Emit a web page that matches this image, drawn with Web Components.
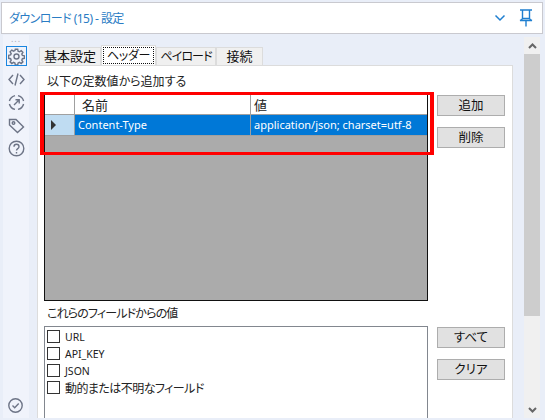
<!DOCTYPE html>
<html lang="ja">
<head>
<meta charset="utf-8">
<title>設定</title>
<style>
html, body { margin: 0; height: 420px; overflow: hidden; background: #e9eef8; }
body { font: 12px "Noto Sans", "Noto Sans CJK JP", sans-serif; color: #222; font-feature-settings: "palt"; }
</style>
</head>
<body>
<settings-window>
  <title-bar>ダウンロード (15) - 設定</title-bar>
  <side-rail></side-rail>
  <tab-strip>
    <tab-item style="width:62px">基本設定</tab-item>
    <tab-item style="width:55px" active kana>ヘッダー</tab-item>
    <tab-item style="width:60px" kana>ペイロード</tab-item>
    <tab-item style="width:47px">接続</tab-item>
  </tab-strip>
  <header-panel></header-panel>
  <scroll-rail></scroll-rail>
</settings-window>
<script>
class SettingsWindow extends HTMLElement {
  constructor() {
    super()
    const shadow = this.attachShadow({ mode: 'open' })
    shadow.innerHTML = `
    <style>
    :host { display: grid; width: 545px; height: 420px; overflow: hidden;
      grid-template-columns: 37px 487px 21px; grid-template-rows: 35px 30px 353px; }
    ::slotted(title-bar) { grid-column: 1 / 4; grid-row: 1; }
    ::slotted(side-rail) { grid-column: 1; grid-row: 2 / 4; }
    ::slotted(tab-strip) { grid-column: 2; grid-row: 2; }
    ::slotted(header-panel) { grid-column: 2; grid-row: 3; }
    ::slotted(scroll-rail) { grid-column: 3; grid-row: 2 / 4; }
    </style>
    <slot></slot>`
  }
}

class TitleBar extends HTMLElement {
  constructor() {
    super()
    const shadow = this.attachShadow({ mode: 'open' })
    shadow.innerHTML = `
    <style>
    :host { display: flex; align-items: center; box-sizing: border-box; height: 32px; margin: 2px 2px 1px 1px;
      padding: 0 9px 0 7px; background: #fff; border: 1px solid #c9c9cf; color: #2a7cc4; font-size: 12px; }
    span { flex: 1; letter-spacing: -.55px; }
    svg { display: block; }
    .down { margin-right: 13px; }
    </style>
    <span><slot></slot></span>
    <svg class="down" width="12" height="8" viewBox="0 0 12 8" fill="none" stroke="#1f7fd0" stroke-width="1.5"><path d="M1.500 1.500 6 6l4.500-4.500"/></svg>
    <svg width="14" height="18" viewBox="0 0 14 18" fill="none" stroke="#1f7fd0" stroke-width="1.4"><path d="M1 1h12M3.500 1v8.500M10.500 1v8.500M1 11.500c1-.3 2-1 2.500-2h7c.5 1 1.500 1.700 2.500 2zM7 11.500V17.500"/></svg>`
  }
}

class SideRail extends HTMLElement {
  constructor() {
    super()
    const shadow = this.attachShadow({ mode: 'open' })
    shadow.innerHTML = `
    <style>
    :host { display: flex; flex-direction: column; align-items: center; box-sizing: border-box; height: 383px;
      padding-top: 2px; background: #f0f3fb; width: 26px; margin-left: 3px; position: relative; }
    .dots { height: 9px; color: #a9adb8; font-size: 9px; line-height: 4px; letter-spacing: 1px; }
    .btn { width: 21px; height: 20px; box-sizing: border-box; display: flex; align-items: center; justify-content: center; margin-bottom: 3px; }
    .btn.on { border: 1px solid #1a86e0; }
    svg { display: block; fill: none; stroke: #6d7486; stroke-width: 1.4; }
    .check { position: absolute; left: 5px; top: 363px; }
    </style>
    <div class="dots">...</div>
    <div class="btn on"><svg width="17" height="17" viewBox="0 0 17 17"><circle cx="8.500" cy="8.500" r="2.500"/><path d="M7.300 1.200h2.400l.4 2 1.400.6 1.700-1.100 1.700 1.700-1.100 1.700.6 1.400 2 .4v2.400l-2 .4-.6 1.400 1.100 1.700-1.700 1.700-1.700-1.100-1.400.6-.4 2H7.300l-.4-2-1.400-.6-1.700 1.100-1.700-1.700 1.100-1.700-.6-1.400-2-.4V7.300l2-.4.6-1.400-1.100-1.700 1.700-1.700 1.700 1.100 1.400-.6z"/></svg></div>
    <div class="btn"><svg width="17" height="15" viewBox="0 0 17 15"><path d="M5 3 1 7.500 5 12M12 3l4 4.500-4 4.500M10 1.500l-3 12"/></svg></div>
    <div class="btn"><svg width="17" height="17" viewBox="0 0 17 17"><path d="M3 4a7.500 7.500 0 0 1 4-2.400M10 1.600A7.500 7.500 0 0 1 15.600 7M15.600 10A7.500 7.500 0 0 1 10 15.400M7 15.400A7.500 7.500 0 0 1 1.400 10M1.400 7A7 7 0 0 1 3 4"/><path d="M6 11l5-5M7.500 5.800H11.200V9.500"/></svg></div>
    <div class="btn"><svg width="17" height="17" viewBox="0 0 17 17"><path d="M1.500 2.500h6.500l7.500 7.500-6 5.500-8-7.500z"/><circle cx="5.500" cy="6" r="1.300"/></svg></div>
    <div class="btn"><svg width="17" height="17" viewBox="0 0 17 17"><circle cx="8.500" cy="8.500" r="7.300"/><path d="M6 6.700c0-3.200 5-3.200 5 0 0 2-2.500 1.800-2.500 3.800"/><path d="M8.500 12v1.500"/></svg></div>
    <svg class="check" width="15" height="15" viewBox="0 0 15 15"><circle cx="7.500" cy="7.500" r="6.700"/><path d="M4.500 7.500l2.200 2.200 4-4.200"/></svg>`
  }
}

class TabStrip extends HTMLElement {
  constructor() {
    super()
    const shadow = this.attachShadow({ mode: 'open' })
    shadow.innerHTML = `
    <style>
    :host { display: flex; align-items: flex-end; height: 30px; padding-left: 2px; box-sizing: border-box; }
    </style>
    <slot></slot>`
  }
}

class TabItem extends HTMLElement {
  constructor() {
    super()
    const shadow = this.attachShadow({ mode: 'open' })
    shadow.innerHTML = `
    <style>
    :host { display: block; box-sizing: border-box; height: 18px; line-height: 17px; white-space: nowrap; text-align: center;
      background: #f0f0f0; border: 1px solid #dcdcdc; border-bottom: 0; font-size: 13px; color: #111; }
    :host([kana]) { font-size: 12px; letter-spacing: -.9px; }
    :host([active]) { height: 20px; background: #fff; padding: 2px 2px 0; line-height: 15px; letter-spacing: -.3px; }
    span { display: block; }
    :host([active]) span { outline: 1px dotted #111; height: 15px; }
    </style>
    <span><slot></slot></span>`
  }
}

class PushButton extends HTMLElement {
  constructor() {
    super()
    const shadow = this.attachShadow({ mode: 'open' })
    shadow.innerHTML = `
    <style>
    :host { display: block; box-sizing: border-box; width: 68px; height: 21px; line-height: 19px; text-align: center;
      background: #e1e1e1; border: 1px solid #adadad; color: #111; font-size: 12.500px; }
    </style>
    <slot></slot>`
  }
}

class ConstGrid extends HTMLElement {
  constructor() {
    super()
    const shadow = this.attachShadow({ mode: 'open' })
    shadow.innerHTML = `
    <style>
    :host { display: block; box-sizing: border-box; width: 384px; height: 206px; background: #ababab;
      border: 1px solid #111; border-top: 0; }
    .row { display: grid; grid-template-columns: 30px 176px 1fr; }
    .cell { box-sizing: border-box; height: 20px; padding-left: 3px; border-right: 1px solid #a0a0a0; border-bottom: 1px solid #a0a0a0;
      line-height: 18px; white-space: nowrap; overflow: hidden; background: #fff; font-size: 11.500px; }
    .head .cell { font-size: 13px; padding-left: 7px; line-height: 20px; }
    .head .cell:last-child { padding-left: 3px; border-right: 0; }
    .sel .cell { background: #0078d7; color: #fff; height: 21px; line-height: 20px; font-size: 11px; }
    .sel .cell:last-child { border-right: 0; }
    .sel .mark { background: #bfdcf2; display: flex; align-items: center; padding-left: 6px; }
    .mark i { display: block; width: 0; height: 0; border-left: 5px solid #333; border-top: 5px solid transparent; border-bottom: 5px solid transparent; }
    </style>
    <div class="row head"><div class="cell"></div><div class="cell">名前</div><div class="cell">値</div></div>
    <div class="row sel"><div class="cell mark"><i></i></div><div class="cell">Content-Type</div><div class="cell">application/json; charset=utf-8</div></div>`
  }
}

class FieldList extends HTMLElement {
  constructor() {
    super()
    const shadow = this.attachShadow({ mode: 'open' })
    shadow.innerHTML = `
    <style>
    :host { display: block; box-sizing: border-box; width: 384px; height: 92px; padding: 1px 0 0 2px; background: #fff;
      border: 1px solid #82878f; border-bottom: 0; }
    </style>
    <slot></slot>`
  }
}

class FieldOption extends HTMLElement {
  constructor() {
    super()
    const shadow = this.attachShadow({ mode: 'open' })
    shadow.innerHTML = `
    <style>
    :host { display: flex; align-items: center; gap: 5px; height: 17px; font-size: 10.500px; color: #222; }
    :host([jp]) { font-size: 12px; letter-spacing: -.55px; }
    i { display: block; width: 13px; height: 13px; box-sizing: border-box; border: 1px solid #333; background: #fff; flex: none; }
    </style>
    <i></i><span><slot></slot></span>`
  }
}

class HeaderPanel extends HTMLElement {
  constructor() {
    super()
    const shadow = this.attachShadow({ mode: 'open' })
    shadow.innerHTML = `
    <style>
    :host { display: block; box-sizing: border-box; width: 476px; height: 353px; background: #fff;
      border: 1px solid #dcdcdc; border-bottom: 0; padding: 7px 0 0 6px; position: relative; }
    .lbl { height: 22px; padding-left: 3px; line-height: 18px; font-size: 12px; }
    .row { display: flex; gap: 8px; }
    .side { display: flex; flex-direction: column; gap: 11px; padding-left: 1px; }
    .second { margin-top: 5px; }
    .lbl2 { height: 20px; padding-left: 3px; line-height: 16px; font-size: 12px; letter-spacing: -.85px; }
    .second .side { padding-top: 1px; }
    .mark { position: absolute; left: 2px; top: 26px; width: 394px; height: 63px; box-sizing: border-box;
      border: solid #f00; border-width: 3px 4px; pointer-events: none; }
    </style>
    <div class="lbl">以下の定数値から追加する</div>
    <div class="row">
      <const-grid></const-grid>
      <div class="side"><push-button>追加</push-button><push-button>削除</push-button></div>
    </div>
    <div class="second">
      <div class="lbl2">これらのフィールドからの値</div>
      <div class="row">
        <field-list>
          <field-option>URL</field-option>
          <field-option>API_KEY</field-option>
          <field-option>JSON</field-option>
          <field-option jp>動的または不明なフィールド</field-option>
        </field-list>
        <div class="side"><push-button>すべて</push-button><push-button>クリア</push-button></div>
      </div>
    </div>
    <div class="mark"></div>`
  }
}

class ScrollRail extends HTMLElement {
  constructor() {
    super()
    const shadow = this.attachShadow({ mode: 'open' })
    shadow.innerHTML = `
    <style>
    :host { display: flex; flex-direction: column; width: 16px; height: 381px; box-sizing: border-box; background: #f0f0f0; margin-top: 2px; }
    .arrow { height: 17px; display: flex; align-items: center; justify-content: center; flex: none; }
    .thumb { height: 262px; background: #cdcdcd; flex: none; }
    .grow { flex: 1; }
    svg { display: block; fill: none; stroke: #666; stroke-width: 2; }
    </style>
    <div class="arrow"><svg width="9" height="6" viewBox="0 0 9 6"><path d="M1 5l3.500-3.500L8 5"/></svg></div>
    <div class="thumb"></div>
    <div class="grow"></div>
    <div class="arrow"><svg width="9" height="6" viewBox="0 0 9 6"><path d="M1 1l3.500 3.500L8 1"/></svg></div>`
  }
}

customElements.define('settings-window', SettingsWindow)
customElements.define('title-bar', TitleBar)
customElements.define('side-rail', SideRail)
customElements.define('tab-strip', TabStrip)
customElements.define('tab-item', TabItem)
customElements.define('push-button', PushButton)
customElements.define('const-grid', ConstGrid)
customElements.define('field-list', FieldList)
customElements.define('field-option', FieldOption)
customElements.define('header-panel', HeaderPanel)
customElements.define('scroll-rail', ScrollRail)
</script>
</body>
</html>
